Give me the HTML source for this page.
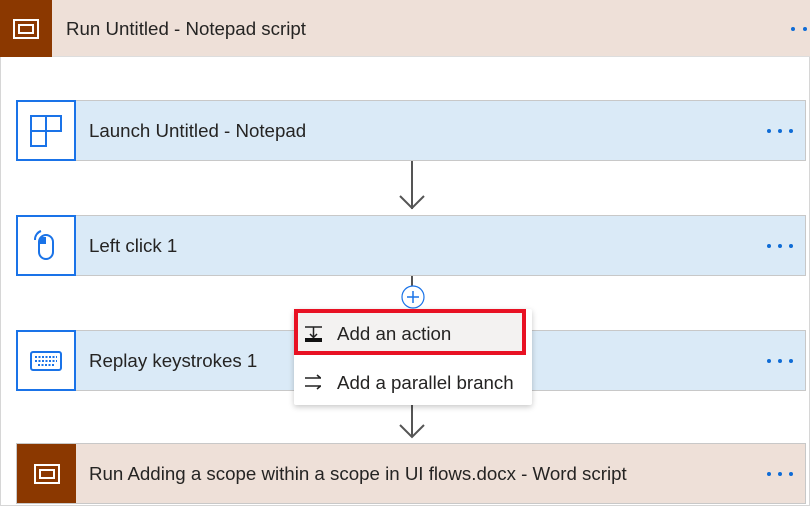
<!DOCTYPE html>
<html><head><style>
*{margin:0;padding:0;box-sizing:border-box}
body{width:810px;height:506px;overflow:hidden;background:#fff;font-family:"Liberation Sans",sans-serif;color:#252423;position:relative}
.frame{position:absolute;left:0;top:0;width:810px;height:506px;border-left:1px solid #d6d6d6;border-right:1px solid #d6d6d6;border-bottom:1px solid #d6d6d6}
.card{position:absolute;left:16px;width:790px;height:61px;border:1px solid #c8c8c8}
.blue{background:#daeaf7}
.tan{background:#eee0d8}
.ic{position:absolute;left:0;top:0;width:59px;height:59px;display:flex;align-items:center;justify-content:center}
.ic.w{background:#fff;border:2px solid #1a73e8;left:-1px;top:-1px;width:60px;height:61px}
.ic.b{background:#8b3800}
.t{position:absolute;left:72px;top:0;line-height:59px;font-size:18.7px}
.dots{position:absolute;top:28px;left:750px}
.dots i{position:absolute;width:4px;height:4px;border-radius:50%;background:#0f6cd6}
.line{position:absolute;left:411px;width:2px;background:#555}
</style></head><body>
<div class="frame"></div>
<div style="position:absolute;left:0;top:0;width:810px;height:57px;background:#eee0d8;border-bottom:1px solid #ddd">
 <div style="position:absolute;left:0;top:0;width:52px;height:57px;background:#8b3800;display:flex;align-items:center;justify-content:center">
  <svg width="26" height="20"><rect x="1" y="1" width="24" height="18" fill="none" stroke="#fff" stroke-width="2"/><rect x="6" y="6" width="14" height="8" fill="none" stroke="#fff" stroke-width="2"/></svg></div>
 <div style="position:absolute;left:66px;top:0;line-height:57px;font-size:18.7px">Run Untitled - Notepad script</div>
 <div style="position:absolute;left:791px;top:27px;width:4px;height:4px;border-radius:50%;background:#0f6cd6"></div>
 <div style="position:absolute;left:803px;top:27px;width:4px;height:4px;border-radius:50%;background:#0f6cd6"></div>
</div>

<div class="card blue" style="top:100px">
 <div class="ic w"><svg width="34" height="34"><path d="M2 2h30v15H17v15H2zM2 17h15M17 2v15" fill="none" stroke="#1a73e8" stroke-width="2"/></svg></div>
 <div class="t">Launch Untitled - Notepad</div>
 <div class="dots"><i style="left:0"></i><i style="left:11px"></i><i style="left:22px"></i></div>
</div>
<div class="line" style="top:161px;height:48px"></div>
<svg style="position:absolute;left:398px;top:193px" width="28" height="20"><path d="M2 3l12 12 12-12" fill="none" stroke="#555" stroke-width="2"/></svg>

<div class="card blue" style="top:215px">
 <div class="ic w"><svg width="26" height="32"><rect x="6" y="5" width="14" height="24" rx="7" fill="none" stroke="#1a73e8" stroke-width="2"/><path d="M7 7h6v7H6z" fill="#1a73e8"/><path d="M2 10a9 9 0 0 1 6-9" fill="none" stroke="#1a73e8" stroke-width="2"/></svg></div>
 <div class="t">Left click 1</div>
 <div class="dots"><i style="left:0"></i><i style="left:11px"></i><i style="left:22px"></i></div>
</div>
<div class="line" style="top:276px;height:10px"></div>
<svg style="position:absolute;left:401px;top:285px" width="24" height="24"><circle cx="12" cy="12" r="11" fill="#fff" stroke="#1a73e8" stroke-width="1.2"/><path d="M12 6v12M6 12h12" stroke="#1a73e8" stroke-width="1.5"/></svg>

<div class="card blue" style="top:330px">
 <div class="ic w"><svg width="34" height="22"><rect x="2" y="2" width="30" height="18" rx="2" fill="none" stroke="#1a73e8" stroke-width="2"/><path d="M6 7h22M6 11h22M9 15h16" stroke="#1a73e8" stroke-width="2" stroke-dasharray="2 1.5"/></svg></div>
 <div class="t">Replay keystrokes 1</div>
 <div class="dots"><i style="left:0"></i><i style="left:11px"></i><i style="left:22px"></i></div>
</div>
<div class="line" style="top:391px;height:46px"></div>
<svg style="position:absolute;left:398px;top:422px" width="28" height="20"><path d="M2 3l12 12 12-12" fill="none" stroke="#555" stroke-width="2"/></svg>

<div class="card tan" style="top:443px">
 <div class="ic b"><svg width="26" height="20"><rect x="1" y="1" width="24" height="18" fill="none" stroke="#fff" stroke-width="2"/><rect x="6" y="6" width="14" height="8" fill="none" stroke="#fff" stroke-width="2"/></svg></div>
 <div class="t">Run Adding a scope within a scope in UI flows.docx - Word script</div>
 <div class="dots"><i style="left:0"></i><i style="left:11px"></i><i style="left:22px"></i></div>
</div>

<div style="position:absolute;left:294px;top:309px;width:238px;height:96px;background:#fff;box-shadow:0 2px 6px rgba(0,0,0,.22);border-radius:2px">
 <div style="position:absolute;left:0;top:0;width:232px;height:46px;background:#f3f2f1;border:4px solid #e81123"></div>
 <svg style="position:absolute;left:10px;top:16px" width="20" height="20"><path d="M1 2h17M9.5 2v10M6 9l3.5 3.5L13 9" fill="none" stroke="#222" stroke-width="1.5"/><rect x="1" y="13" width="17" height="4" fill="#111"/></svg>
 <div style="position:absolute;left:43px;top:0;line-height:50px;font-size:18.7px">Add an action</div>
 <svg style="position:absolute;left:10px;top:65px" width="20" height="16"><path d="M1 4h16M13 1l3.5 3M1 12h16M13 15l3.5-3" fill="none" stroke="#222" stroke-width="1.5"/></svg>
 <div style="position:absolute;left:43px;top:50px;line-height:48px;font-size:18.7px">Add a parallel branch</div>
</div>
</body></html>
